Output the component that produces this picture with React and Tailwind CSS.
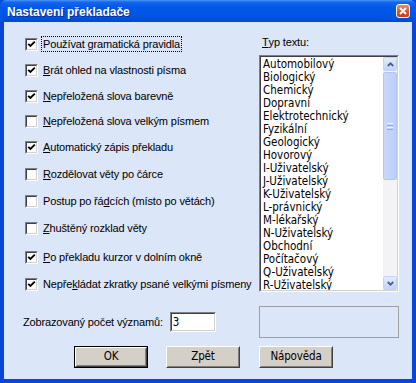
import React from 'react';

const options = [
  { a: 'Používat ', k: 'g', b: 'ramatická pravidla', on: true, focus: true, gap: '' },
  { a: '', k: 'B', b: 'rát ohled na vlastnosti písma', on: true, gap: 'mt-[10px]' },
  { a: '', k: 'N', b: 'epřeložená slova barevně', on: true, gap: 'mt-[10px]' },
  { a: '', k: 'N', b: 'epřeložená slova velkým písmem', on: false, gap: 'mt-[9px]' },
  { a: '', k: 'A', b: 'utomatický zápis překladu', on: true, gap: 'mt-[10px]' },
  { a: '', k: 'R', b: 'ozdělovat věty po čárce', on: false, gap: 'mt-[11px]' },
  { a: 'Postup po řá', k: 'd', b: 'cích (místo po větách)', on: false, gap: 'mt-[11px]' },
  { a: '', k: 'Z', b: 'huštěný rozklad věty', on: false, gap: 'mt-[11px]' },
  { a: '', k: 'P', b: 'o překladu kurzor v dolním okně', on: true, gap: 'mt-[13px]' },
  { a: 'Nepře', k: 'k', b: 'ládat zkratky psané velkými písmeny', on: true, gap: 'mt-[11px]' },
];

const types = [
  'Automobilový', 'Biologický', 'Chemický', 'Dopravní', 'Elektrotechnický', 'Fyzikální',
  'Geologický', 'Hovorový', 'I-Uživatelský', 'J-Uživatelský', 'K-Uživatelský', 'L-právnický',
  'M-lékařský', 'N-Uživatelský', 'Obchodní', 'Počítačový', 'Q-Uživatelský', 'R-Uživatelský',
  'S-Uživatelský',
];

function CheckBox({ on }) {
  return (
    <div className="w-[13px] h-[13px] border border-t-[#808080] border-l-[#808080] border-b-white border-r-white shrink-0">
      <div className="w-full h-full border border-t-[#404040] border-l-[#404040] border-b-[#d4d0c8] border-r-[#d4d0c8] bg-white flex items-center justify-center">
        {on && (
          <svg width="9" height="9" viewBox="0 0 9 9">
            <path d="M1.2 3.8 L3.4 6 L7.8 1.6" fill="none" stroke="#000" strokeWidth="1.9" />
          </svg>
        )}
      </div>
    </div>
  );
}

function Button({ children, def }) {
  return (
    <div className={`w-[74px] h-[22px] ${def ? 'border border-black' : ''}`}>
      <div className="w-full h-full border border-t-white border-l-white border-b-[#404040] border-r-[#404040]">
        <div className="w-full h-full border border-t-[#d4d0c8] border-l-[#d4d0c8] border-b-[#808080] border-r-[#808080] bg-[#d4d0c8] flex items-center justify-center font-['DejaVu_Sans_Condensed','Liberation_Sans_Narrow',sans-serif] text-[11.5px] text-black">
          {children}
        </div>
      </div>
    </div>
  );
}

function Chevron({ up }) {
  return (
    <svg width="7" height="5" viewBox="0 0 7 5">
      <path d={up ? 'M0.8 4 L3.5 1.3 L6.2 4' : 'M0.8 1 L3.5 3.7 L6.2 1'} fill="none" stroke="#4d6185" strokeWidth="1.8" />
    </svg>
  );
}

export default function App() {
  return (
    <div className="w-[416px] h-[383px] bg-[#0846d8] flex flex-col font-['Liberation_Sans',sans-serif] text-[11px] tracking-[-0.15px] text-black select-none">
      <div className="h-[22px] shrink-0 flex items-center pl-[7px] pr-[6px] bg-[linear-gradient(to_bottom,#4a96fa_0%,#1466ec_10%,#0058e8_35%,#0055e2_75%,#0049d0_100%)] rounded-t-[6px]">
        <span className="flex-1 pt-[2px] text-white font-bold text-[12px] tracking-normal [text-shadow:1px_1px_0_#0c2b8c]">
          Nastavení překladače
        </span>
        <div className="w-[14px] h-[14px] rounded-[3px] border border-white bg-[linear-gradient(to_bottom,#ee8a68,#d8502c_60%,#c23e1c)] flex items-center justify-center">
          <svg width="8" height="8" viewBox="0 0 8 8">
            <path d="M1 1 L7 7 M7 1 L1 7" stroke="#fff" strokeWidth="1.8" />
          </svg>
        </div>
      </div>

      <div className="flex-1 mx-[4px] mb-[4px] bg-[#dbe6f8] flex flex-col pt-[12px]">
        <div className="flex">
          <div className="w-[255px] pl-[21px] pt-[2px] flex flex-col">
            {options.map((o, i) => (
              <div key={i} className={`h-[16px] flex items-center ${o.gap}`}>
                <CheckBox on={o.on} />
                <span
                  className={`ml-[3px] px-[1px] leading-[14px] whitespace-nowrap border ${
                    o.focus ? 'border-dotted border-black' : 'border-transparent'
                  }`}
                >
                  {o.a}
                  <span className="underline underline-offset-[1px]">{o.k}</span>
                  {o.b}
                </span>
              </div>
            ))}
          </div>

          <div className="w-[140px] flex flex-col">
            <div className="h-[16px] pl-[3px] flex items-center">
              <span className="underline underline-offset-[1px]">T</span>yp textu:
            </div>
            <div className="mt-[5px] h-[237px] border border-t-[#808080] border-l-[#808080] border-b-white border-r-white">
              <div className="w-full h-full border border-t-[#404040] border-l-[#404040] border-b-[#d4d0c8] border-r-[#d4d0c8] bg-white flex overflow-hidden">
                <div className="flex-1 pl-[2px] overflow-hidden font-['DejaVu_Sans_Condensed','Liberation_Sans_Narrow',sans-serif] text-[11.5px] tracking-normal leading-[13px] pt-[1px]">
                  {types.map((t) => (
                    <div key={t} className="h-[13px] whitespace-nowrap">
                      {t}
                    </div>
                  ))}
                </div>
                <div className="w-[14px] h-full bg-[#f3f3f6] flex flex-col">
                  <div className="h-[14px] rounded-[2px] border border-[#c3d3f8] bg-[linear-gradient(to_bottom,#e3ebff,#c1d3fb)] flex items-center justify-center">
                    <Chevron up />
                  </div>
                  <div className="mt-[1px] h-[108px] rounded-[2px] border border-[#b1c6f5] bg-[linear-gradient(to_right,#c9d8fc,#bccff8)] flex items-center justify-center">
                    <div className="flex flex-col gap-[1px]">
                      <div className="w-[6px] h-[1px] bg-[#eef3ff]" />
                      <div className="w-[6px] h-[1px] bg-[#8ea8e6]" />
                      <div className="w-[6px] h-[1px] bg-[#eef3ff]" />
                      <div className="w-[6px] h-[1px] bg-[#8ea8e6]" />
                    </div>
                  </div>
                  <div className="flex-1" />
                  <div className="h-[14px] rounded-[2px] border border-[#c3d3f8] bg-[linear-gradient(to_bottom,#e3ebff,#c1d3fb)] flex items-center justify-center">
                    <Chevron />
                  </div>
                </div>
              </div>
            </div>
          </div>
        </div>

        <div className="mt-[14px] h-[32px] flex items-center">
          <div className="w-[255px] pl-[19px] flex items-center">
            <span className="whitespace-nowrap">Zobrazovaný počet významů:</span>
            <div className="ml-[7px] w-[46px] h-[20px] border border-t-[#808080] border-l-[#808080] border-b-white border-r-white">
              <div className="w-full h-full border border-t-[#404040] border-l-[#404040] border-b-[#d4d0c8] border-r-[#d4d0c8] bg-white pl-[1px] font-['DejaVu_Sans_Condensed','Liberation_Sans_Narrow',sans-serif] text-[11.5px] leading-[16px]">
                3
              </div>
            </div>
          </div>
          <div className="w-[140px] h-[32px] border border-[#a0a0a0]" />
        </div>

        <div className="mt-[8px] flex pl-[70px]">
          <Button def>OK</Button>
          <div className="ml-[18px]">
            <Button>Zpět</Button>
          </div>
          <div className="ml-[19px]">
            <Button>Nápověda</Button>
          </div>
        </div>
      </div>
    </div>
  );
}
